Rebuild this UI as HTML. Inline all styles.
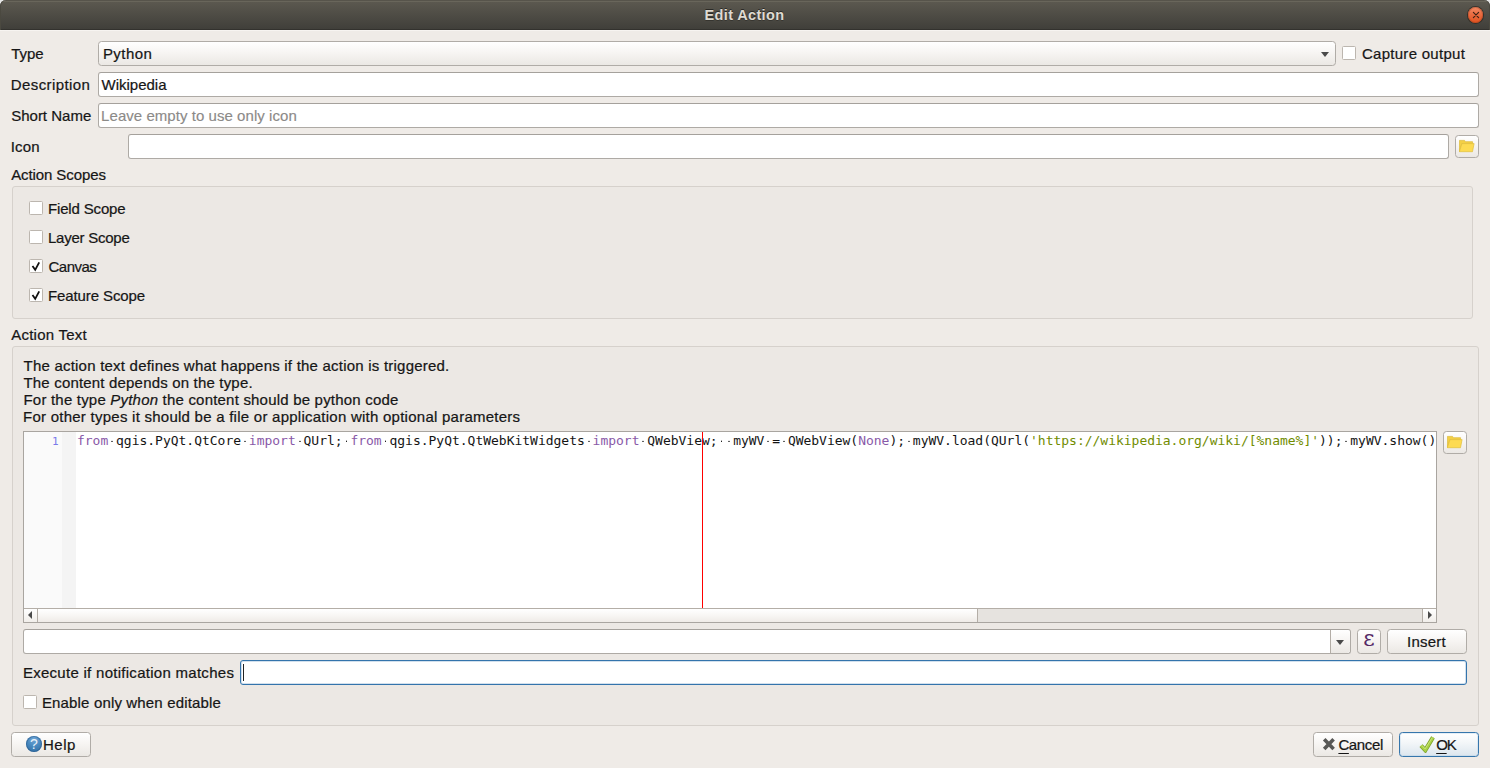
<!DOCTYPE html>
<html lang="en">
<head>
<meta charset="utf-8">
<title>Edit Action</title>
<style>
*{box-sizing:border-box;margin:0;padding:0}
html,body{width:1490px;height:768px;overflow:hidden;background:#efebe7}
body{position:relative;font-family:"Liberation Sans",sans-serif;font-size:15px;color:#161616;letter-spacing:0;-webkit-text-stroke-width:.22px}
.abs{position:absolute}
.t{position:absolute;white-space:nowrap;line-height:18px;height:18px}
/* title bar */
#tb{left:0;top:0;width:1490px;height:30px;border-radius:6px 6px 0 0;
 background:linear-gradient(#57544b 0,#57544b 1px,#69665b 1px,#69665b 2px,#5b584f 2px,#403f3a 29px,#33322e 29px,#33322e 30px);
 box-shadow:inset 1px 0 0 #4b4940,inset -1px 0 0 #4b4940}
#tbhl{left:0;top:30px;width:1490px;height:1px;background:#f7f4f1}
#title{-webkit-text-stroke-width:0;left:704.5px;top:6.4px;font-size:14.5px;font-weight:bold;color:#dfdbd2;text-shadow:0 -1px 0 #2b2a26,0 1px 0 rgba(43,42,38,.6);letter-spacing:.36px}
#close{left:1467.9px;top:7.2px;width:15.6px;height:15.6px;border-radius:50%;
 background:linear-gradient(#f38c66 0,#ea6a3f 50%,#e2531f 100%);
 box-shadow:0 0 0 1px rgba(45,40,34,.75),inset 0 0 0 1px rgba(150,55,25,.35)}
/* line edits */
.le{position:absolute;height:25px;background:#fff;border:1px solid #aeaaa5;border-top-color:#a5a19c;border-radius:3px}
.ph{color:#8c8a88;-webkit-text-stroke-width:.15px}
/* buttons */
.btn{position:absolute;border:1px solid #b0aca7;border-radius:3.5px;
 background:linear-gradient(#ffffff 0,#f7f5f3 45%,#ebe8e4 100%)}
.cb{position:absolute;width:14px;height:14px;background:#fff;border:1px solid #bcb6af;border-radius:1.5px}
.gb{position:absolute;background:#ece8e4;border:1px solid #d6d1cc;border-radius:3px}
.tri{position:absolute;width:0;height:0}
/* editor */
#ed{-webkit-text-stroke-width:0;left:23px;top:431px;width:1414px;height:192px;border:1px solid #a9a5a0;background:#fff;overflow:hidden}
.code{position:absolute;left:53px;top:1px;white-space:pre;font-family:"DejaVu Sans Mono","Liberation Mono",monospace;font-size:13px;line-height:16px;letter-spacing:-.016px;color:#141414}
.kw{color:#8959a8}.st{color:#718c00}
.ws{background:radial-gradient(circle at 50% 55%,#222 0,#222 .4px,rgba(34,34,34,0) .95px)}
</style>
</head>
<body>
<!-- title bar -->
<div class="abs" style="left:0;top:0;width:6px;height:6px;background:#e8e8e8"></div><div class="abs" style="left:1484px;top:0;width:6px;height:6px;background:#e8e8e8"></div>
<div id="tb" class="abs"></div>
<div id="tbhl" class="abs"></div>
<div id="title" class="t">Edit Action</div>
<div id="close" class="abs"><svg width="16" height="16" viewBox="0 0 16 16" style="position:absolute;left:-.2px;top:-.2px"><path d="M5.4 5.4l5.2 5.2M10.6 5.4l-5.2 5.2" stroke="#3c2215" stroke-width="1.15" stroke-linecap="round" fill="none"/></svg></div>

<!-- row: Type -->
<div class="t" style="left:11.3px;top:45px;letter-spacing:-.09px">Type</div>
<div class="btn" style="left:98px;top:41px;width:1238px;height:25px"></div>
<div class="t" style="left:102.9px;top:45px;letter-spacing:.47px">Python</div>
<div class="tri" style="left:1321px;top:52px;border-left:4px solid transparent;border-right:4px solid transparent;border-top:5px solid #4a4a4a"></div>
<div class="cb" style="left:1342px;top:46px"></div>
<div class="t" style="left:1361.9px;top:45px;letter-spacing:.29px">Capture output</div>

<!-- row: Description -->
<div class="t" style="left:10.8px;top:76px;letter-spacing:.41px">Description</div>
<div class="le" style="left:98px;top:72px;width:1381px"></div>
<div class="t" style="left:101.5px;top:76px">Wikipedia</div>

<!-- row: Short Name -->
<div class="t" style="left:11.2px;top:107px">Short Name</div>
<div class="le" style="left:98px;top:103px;width:1381px"></div>
<div class="t ph" style="left:101.1px;top:107px;letter-spacing:.05px">Leave empty to use only icon</div>

<!-- row: Icon -->
<div class="t" style="left:10.8px;top:138px;letter-spacing:.16px">Icon</div>
<div class="le" style="left:128px;top:134px;width:1321px"></div>
<div class="btn" style="left:1455px;top:135px;width:24px;height:23px"></div>
<svg class="abs" style="left:1459px;top:139px" width="16" height="16" viewBox="0 0 16 16"><path d="M.4 1.4h5.2l.8 1.3h7.2v2H3L.4 12.6z" fill="#f3cf45" stroke="#dcba3a" stroke-width=".7"/><path d="M2.9 4.6H15.1L13.5 12.7H.4z" fill="#fddb52" stroke="#e0be3c" stroke-width=".7"/></svg>

<!-- Action Scopes -->
<div class="t" style="left:11.2px;top:166px;letter-spacing:-.1px">Action Scopes</div>
<div class="gb" style="left:12px;top:186px;width:1461px;height:133px"></div>
<div class="cb" style="left:29px;top:201px"></div>
<div class="t" style="left:48px;top:200px;letter-spacing:-.16px">Field Scope</div>
<div class="cb" style="left:29px;top:230px"></div>
<div class="t" style="left:48px;top:229px;letter-spacing:-.25px">Layer Scope</div>
<div class="cb" style="left:29px;top:259px"></div>
<svg class="abs" style="left:29px;top:259px" width="14" height="14" viewBox="0 0 14 14"><path d="M3.5 7L6.2 10.8L10.2 3.3" stroke="#111" stroke-width="1.8" fill="none"/></svg>
<div class="t" style="left:48.5px;top:258px;letter-spacing:-.5px">Canvas</div>
<div class="cb" style="left:29px;top:288px"></div>
<svg class="abs" style="left:29px;top:288px" width="14" height="14" viewBox="0 0 14 14"><path d="M3.5 7L6.2 10.8L10.2 3.3" stroke="#111" stroke-width="1.8" fill="none"/></svg>
<div class="t" style="left:48px;top:287px;letter-spacing:-.1px">Feature Scope</div>

<!-- Action Text -->
<div class="t" style="left:11.2px;top:326px;letter-spacing:.24px">Action Text</div>
<div class="gb" style="left:12px;top:346px;width:1467px;height:380px"></div>
<div class="t" style="left:23.5px;top:357px;letter-spacing:.22px">The action text defines what happens if the action is triggered.</div>
<div class="t" style="left:23.5px;top:374px;letter-spacing:.18px">The content depends on the type.</div>
<div class="t" style="left:23.5px;top:391px;letter-spacing:.2px">For the type <i>Python</i> the content should be python code</div>
<div class="t" style="left:23px;top:408px;letter-spacing:.25px">For other types it should be a file or application with optional parameters</div>

<!-- editor -->
<div id="ed" class="abs">
 <div class="abs" style="left:0;top:0;width:38px;height:176px;background:#fafafa"></div>
 <div class="abs" style="left:38px;top:0;width:14px;height:176px;background:#f4f4f4"></div>
 <div class="abs" style="left:0;top:3px;width:34.6px;text-align:right;font-family:'DejaVu Sans Mono',monospace;font-size:11px;line-height:13px;color:#7a7aea;letter-spacing:0">1</div>
 <div class="code"><span class="kw">from</span><span class="ws"> </span>qgis.PyQt.QtCore<span class="ws"> </span><span class="kw">import</span><span class="ws"> </span>QUrl;<span class="ws"> </span><span class="kw">from</span><span class="ws"> </span>qgis.PyQt.QtWebKitWidgets<span class="ws"> </span><span class="kw">import</span><span class="ws"> </span>QWebView;<span class="ws"> </span><span class="ws"> </span>myWV<span class="ws"> </span>=<span class="ws"> </span>QWebView(<span class="kw">None</span>);<span class="ws"> </span>myWV.load(QUrl(<span class="st">'https://wikipedia.org/wiki/[%name%]'</span>));<span class="ws"> </span>myWV.show()</div>
 <div class="abs" style="left:678px;top:0;width:1px;height:176px;background:#f00"></div>
 <!-- horizontal scrollbar -->
 <div class="abs" style="left:0;top:176px;width:1412px;height:1px;background:#b4aea7"></div>
 <div class="abs" style="left:0;top:177px;width:1412px;height:13px;background:#e6e3df"></div>
 <div class="abs" style="left:0;top:177px;width:13px;height:13px;background:linear-gradient(#fff,#f1eeea)"></div>
 <div class="abs" style="left:13px;top:177px;width:1px;height:13px;background:#b4aea7"></div>
 <div class="abs" style="left:14px;top:177px;width:940px;height:13px;background:linear-gradient(#ffffff,#f8f6f4 50%,#efebe7);border-right:1px solid #b4aea7"></div>
 <div class="abs" style="left:1398px;top:177px;width:1px;height:13px;background:#b4aea7"></div>
 <div class="abs" style="left:1399px;top:177px;width:13px;height:13px;background:linear-gradient(#fff,#f1eeea)"></div>
 <div class="tri" style="left:4px;top:179px;border-top:4px solid transparent;border-bottom:4px solid transparent;border-right:4px solid #4a4a4a"></div>
 <div class="tri" style="left:1404px;top:179px;border-top:4px solid transparent;border-bottom:4px solid transparent;border-left:4px solid #4a4a4a"></div>
</div>
<div class="btn" style="left:1443px;top:431px;width:24px;height:23px"></div>
<svg class="abs" style="left:1447px;top:435px" width="16" height="16" viewBox="0 0 16 16"><path d="M.4 1.4h5.2l.8 1.3h7.2v2H3L.4 12.6z" fill="#f3cf45" stroke="#dcba3a" stroke-width=".7"/><path d="M2.9 4.6H15.1L13.5 12.7H.4z" fill="#fddb52" stroke="#e0be3c" stroke-width=".7"/></svg>

<!-- expression row -->
<div class="le" style="left:23px;top:629px;width:1328px"></div>
<div class="abs" style="left:1330px;top:630px;width:20px;height:23px;border-left:1px solid #b3ada6;border-radius:0 3px 3px 0;background:linear-gradient(#ffffff 0,#f7f5f3 45%,#ebe8e4 100%)"></div>
<div class="tri" style="left:1336px;top:640px;border-left:4px solid transparent;border-right:4px solid transparent;border-top:5px solid #4a4a4a"></div>
<div class="btn" style="left:1357px;top:629px;width:24px;height:25px"></div>
<div class="t" style="left:1357px;top:629px;width:24px;height:25px;line-height:20px;text-align:center;font-family:'DejaVu Serif','Liberation Serif',serif;font-size:22px;color:#552a66;letter-spacing:0;-webkit-text-stroke-width:0">ε</div>
<div class="btn" style="left:1387px;top:629px;width:80px;height:25px"></div>
<div class="t" style="left:1407px;top:633px;letter-spacing:.25px">Insert</div>

<!-- notification row -->
<div class="t" style="left:22.9px;top:664px;letter-spacing:.28px">Execute if notification matches</div>
<div class="le" style="left:240px;top:660px;width:1227px;border-color:#3474ac;box-shadow:inset 0 0 0 1px rgba(52,116,172,.22)"></div>
<div class="abs" style="left:243px;top:664px;width:1px;height:17px;background:#222"></div>

<div class="cb" style="left:23px;top:695px"></div>
<div class="t" style="left:41.9px;top:694px;letter-spacing:.16px">Enable only when editable</div>

<!-- bottom buttons -->
<div class="btn" style="left:11px;top:732px;width:80px;height:25px"></div>
<div class="abs" style="left:26px;top:736px;width:16px;height:16px;border-radius:50%;background:radial-gradient(circle at 50% 20%,#6fa6d6 0,#4586bd 50%,#2f6a9e 100%);box-shadow:inset 0 0 0 1px rgba(35,85,135,.5)"></div>
<div class="t" style="left:26px;top:735px;width:16px;text-align:center;color:#e9f1f8;font-size:14px;letter-spacing:0;-webkit-text-stroke-width:0">?</div>
<div class="t" style="left:43px;top:736px;letter-spacing:.5px">Help</div>

<div class="btn" style="left:1313px;top:732px;width:80px;height:25px"></div>
<svg class="abs" style="left:1322px;top:737px" width="14" height="14" viewBox="0 0 14 14"><path d="M2.2 2.3L11.6 11.9M11.6 2.3L2.2 11.9" stroke="#575755" stroke-width="3.6" fill="none"/></svg>
<div class="t" style="left:1338.4px;top:736px;letter-spacing:-.37px"><u style="text-underline-offset:2.5px;text-decoration-thickness:1px">C</u>ancel</div>

<div class="btn" style="left:1399px;top:732px;width:80px;height:25px;border-color:#3676ac;background:linear-gradient(#ffffff 0,#f4f7f9 40%,#dce6ee 100%);box-shadow:inset 0 0 0 1px rgba(150,190,225,.25)"></div>
<svg class="abs" style="left:1418px;top:735px" width="18" height="18" viewBox="0 0 18 18"><path d="M3 10.6L7.3 15.2L15 2.4" stroke="#7d9f2c" stroke-width="4.2" fill="none" stroke-linejoin="miter"/><path d="M3 10.6L7.3 15.2L15 2.4" stroke="#a8d145" stroke-width="2.8" fill="none"/><path d="M3.6 10.2L7.1 13.9L14.3 2.6" stroke="#c9e57a" stroke-width="1" fill="none"/></svg>
<div class="t" style="left:1436.2px;top:736px;letter-spacing:-1.2px"><u style="text-underline-offset:2.5px;text-decoration-thickness:1px">O</u>K</div>
</body>
</html>
